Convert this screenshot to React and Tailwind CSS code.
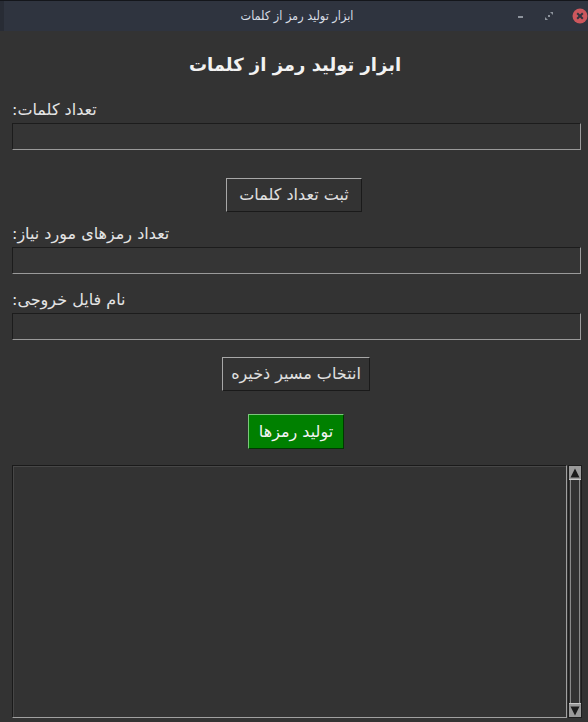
export default function App() {
  const font = { fontFamily: '"DejaVu Sans", "Noto Sans", sans-serif' }

  const entry = 'h-[27px] ml-[12px] mr-[7px] bg-[#353535] border-t border-l border-t-[#1c1c1c] border-l-[#1c1c1c] border-b border-r border-b-[#9a9a9a] border-r-[#9a9a9a]'
  const label = 'ml-[12px] mr-[7px] h-[20px] text-[16px] leading-[20px] text-[#e4e4e4] text-left'
  const raised = 'h-[34px] bg-[#333333] text-[16px] text-[#e0e0e0] border-t border-l border-t-[#a8a8a8] border-l-[#a8a8a8] border-b border-r border-b-[#1a1a1a] border-r-[#1a1a1a]'

  return (
    <div className="w-[588px] h-[722px] flex flex-col bg-[#333333] overflow-hidden" style={font}>
      {/* title bar */}
      <div className="h-[31px] flex bg-[#2f343f] border-t border-t-[#14161b] shrink-0">
        <div className="w-[80px] flex">
          <div className="w-[4px] bg-[#282c35]" />
        </div>
        <div className="flex-1 flex items-center justify-center pl-[6px]">
          <span
            dir="rtl"
            className="text-[12.5px] text-[#d8dee6]"
            style={{ fontFamily: '"DejaVu Sans Condensed", "DejaVu Sans", sans-serif' }}
          >
            ابزار تولید رمز از کلمات
          </span>
        </div>
        <div className="w-[80px] flex items-center justify-end gap-[18px]">
          <svg width="10" height="10" viewBox="0 0 10 10">
            <rect x="2" y="5" width="5" height="2" fill="#8d939c" />
          </svg>
          <svg width="10" height="10" viewBox="0 0 10 10">
            <polygon points="6,1 9,1 9,4" fill="#8d939c" />
            <polygon points="1,6 1,9 4,9" fill="#8d939c" />
            <polygon points="4,4 6,4 6,6 4,6" fill="#8d939c" />
          </svg>
          <svg width="16" height="16" viewBox="0 0 16 16">
            <circle cx="8" cy="8" r="7.5" fill="#cc575d" />
            <path d="M5.2 5.2 L10.8 10.8 M10.8 5.2 L5.2 10.8" stroke="#2f343f" strokeWidth="2" />
          </svg>
        </div>
      </div>

      {/* heading */}
      <div dir="rtl" className="pt-[20px] h-[48px] text-center text-[18px] leading-[28px] font-bold text-[#f2f2f2] pl-[2px]">
        ابزار تولید رمز از کلمات
      </div>

      <div className={`${label} mt-[21px]`}>
        <span dir="rtl">تعداد کلمات:</span>
      </div>
      <div className={`${entry} mt-[3px]`} />

      <div className="flex justify-center mt-[28px]">
        <button dir="rtl" className={`${raised} px-[12px]`}>ثبت تعداد کلمات</button>
      </div>

      <div className={`${label} mt-[12px]`}>
        <span dir="rtl">تعداد رمزهای مورد نیاز:</span>
      </div>
      <div className={`${entry} mt-[3px]`} />

      <div className={`${label} mt-[16px]`}>
        <span dir="rtl">نام فایل خروجی:</span>
      </div>
      <div className={`${entry} mt-[3px]`} />

      <div className="flex justify-center mt-[17px] pl-[4px]">
        <button dir="rtl" className={`${raised} px-[8px]`}>انتخاب مسیر ذخیره</button>
      </div>

      <div className="flex justify-center mt-[23px] pl-[4px]">
        <button
          dir="rtl"
          className="h-[35px] px-[10px] bg-[#008000] text-[16px] text-[#f4f4f4] border-t border-l border-t-[#7cc47c] border-l-[#7cc47c] border-b border-r border-b-[#003800] border-r-[#003800]"
        >
          تولید رمزها
        </button>
      </div>

      {/* text area with scrollbar */}
      <div className="mt-[16px] ml-[12px] mr-[6px] h-[253px] flex">
        <div className="flex-1 bg-[#333333] border-t border-l border-t-[#1a1a1a] border-l-[#1a1a1a] border-b border-r border-b-[#a0a0a0] border-r-[#a0a0a0] shadow-[inset_1px_1px_0_#474747]" />
        <div className="w-[14px] ml-[1px] flex flex-col bg-[#333333] border border-[#1e1e1e]">
          <div className="h-[14px] bg-[#9a9a9a] flex items-center justify-center border-b border-[#c8c8c8]">
            <svg width="10" height="10" viewBox="0 0 10 10">
              <polygon points="5,0.5 9.5,9.5 0.5,9.5" fill="#1a1a1a" />
            </svg>
          </div>
          <div className="flex-1 mx-[1px] border-x border-[#8a8a8a]" />
          <div className="h-[14px] bg-[#9a9a9a] flex items-center justify-center border-t border-[#c8c8c8]">
            <svg width="10" height="10" viewBox="0 0 10 10">
              <polygon points="0.5,0.5 9.5,0.5 5,9.5" fill="#1a1a1a" />
            </svg>
          </div>
        </div>
      </div>
    </div>
  )
}
